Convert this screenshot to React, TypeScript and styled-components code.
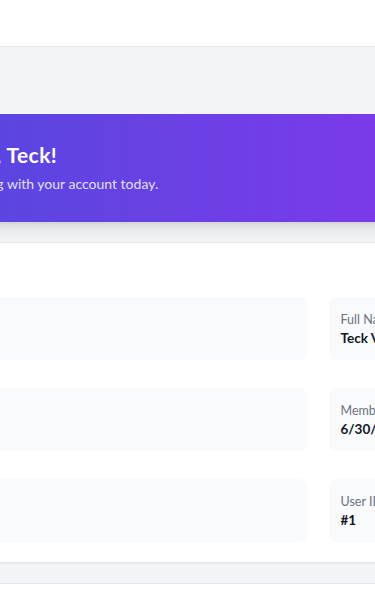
import * as React from "react";
import styled, { createGlobalStyle } from "styled-components";

const GlobalStyle = createGlobalStyle`
  html, body {
    margin: 0;
    padding: 0;
    overflow-x: hidden;
    background: #f3f4f6;
    font-family: Lato, "Open Sans", "Liberation Sans", sans-serif;
  }

  #root {
    display: flex;
    justify-content: center;
  }
`;

const AppShell = styled.div`
  flex: 0 0 778px;
  min-height: 100vh;
  background: #f3f4f6;
`;

const Header = styled.header`
  height: 46px;
  background: #ffffff;
  border-bottom: 1px solid #e5e7eb;
  display: flex;
  align-items: center;
  justify-content: space-between;
  padding: 0 24px;
`;

const Brand = styled.div`
  font-size: 18px;
  font-weight: 700;
  color: #4f46e5;
`;

const LogoutButton = styled.button`
  border: 0;
  background: transparent;
  color: #4b5563;
  font: inherit;
  font-size: 14px;
`;

const Main = styled.main`
  display: flex;
  flex-direction: column;
  gap: 20px;
  padding: 67px 24px 24px;
`;

const Banner = styled.section`
  padding: 27px 32px 28px;
  border-radius: 8px;
  background: linear-gradient(90deg, #4d4ae0 0%, #8836e8 100%);
  box-shadow: 0 10px 15px -3px rgba(0, 0, 0, 0.1),
    0 4px 6px -4px rgba(0, 0, 0, 0.1);
`;

const BannerTitle = styled.h1`
  margin: 0;
  font-size: 21px;
  line-height: 28px;
  font-weight: 700;
  letter-spacing: 0.4px;
  color: #ffffff;
`;

const BannerText = styled.p`
  margin: 5px 0 0;
  font-size: 14px;
  line-height: 20px;
  color: #e2e0fa;
`;

const Card = styled.section`
  background: #ffffff;
  border: 1px solid #e5e7eb;
  border-radius: 8px;
  box-shadow: 0 1px 2px rgba(0, 0, 0, 0.05);
  padding: 24px 24px 20px;
`;

const CardTitle = styled.h2`
  margin: 0 0 2px;
  font-size: 18px;
  line-height: 28px;
  font-weight: 700;
  color: #111827;
`;

const InfoGrid = styled.div`
  display: grid;
  grid-template-columns: 1fr 199px;
  column-gap: 22px;
  row-gap: 28px;
`;

const InfoBox = styled.div`
  height: 63px;
  box-sizing: border-box;
  padding: 15px 12px 12px;
  border-radius: 8px;
  background: #f9fafb;
  white-space: nowrap;
`;

const InfoLabel = styled.div`
  font-size: 12.5px;
  line-height: 16px;
  color: #6b7280;
`;

const InfoValue = styled.div`
  font-size: 13.5px;
  line-height: 20px;
  font-weight: 700;
  color: #111827;
`;

const ActivityList = styled.ul`
  margin: 12px 0 0;
  padding: 0;
  list-style: none;
  font-size: 14px;
  color: #4b5563;
`;

const info = [
  { label: "Email Address", value: "teck@example.com" },
  { label: "Full Name", value: "Teck Vang" },
  { label: "Username", value: "teck" },
  { label: "Member Since", value: "6/30/2025" },
  { label: "Account Status", value: "Active" },
  { label: "User ID", value: "#1" },
];

const App: React.FunctionComponent = () => {
  return (
    <AppShell>
      <GlobalStyle />
      <Header>
        <Brand>MyApp</Brand>
        <LogoutButton>Logout</LogoutButton>
      </Header>
      <Main>
        <Banner>
          <BannerTitle>Welcome back, Teck!</BannerTitle>
          <BannerText>Here's what's happening with your account today.</BannerText>
        </Banner>
        <Card>
          <CardTitle>Account Details</CardTitle>
          <InfoGrid>
            {info.map((item) => (
              <InfoBox key={item.label}>
                <InfoLabel>{item.label}</InfoLabel>
                <InfoValue>{item.value}</InfoValue>
              </InfoBox>
            ))}
          </InfoGrid>
        </Card>
        <Card>
          <CardTitle>Recent Activity</CardTitle>
          <ActivityList>
            <li>Signed in</li>
          </ActivityList>
        </Card>
      </Main>
    </AppShell>
  );
};

export default App;
